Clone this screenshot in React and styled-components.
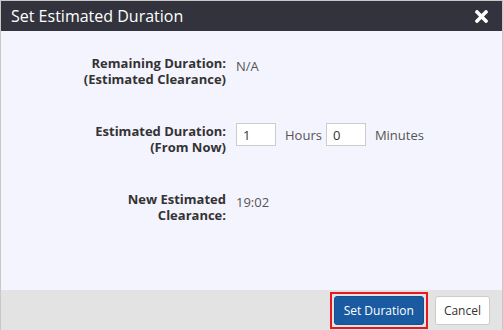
import React, { useState } from 'react'
import styled, { createGlobalStyle } from 'styled-components'
import { FaTimes } from 'react-icons/fa'

const GlobalStyle = createGlobalStyle`
    html, body {
        margin: 0;
        padding: 0;
        background: #ffffff;
    }
    * {
        box-sizing: border-box;
    }
`

function App() {
    const [hours, setHours] = useState('1')
    const [minutes, setMinutes] = useState('0')

    return (
        <>
            <GlobalStyle />
            <Dialog>
                <Header>
                    <Title>Set Estimated Duration</Title>
                    <CloseBtn aria-label="Close">
                        <FaTimes />
                    </CloseBtn>
                </Header>
                <Body>
                    <Row>
                        <Label>
                            <LabelLine>Remaining Duration:</LabelLine>
                            <LabelLine>(Estimated Clearance)</LabelLine>
                        </Label>
                        <Value>N/A</Value>
                    </Row>
                    <Row>
                        <Label>
                            <LabelLine>Estimated Duration:</LabelLine>
                            <LabelLine>(From Now)</LabelLine>
                        </Label>
                        <Value>
                            <NumberInput
                                value={hours}
                                onChange={(e) => setHours(e.target.value)}
                            />
                            <Unit>Hours</Unit>
                            <NumberInput
                                value={minutes}
                                onChange={(e) => setMinutes(e.target.value)}
                            />
                            <Unit>Minutes</Unit>
                        </Value>
                    </Row>
                    <Row>
                        <Label>
                            <LabelLine>New Estimated</LabelLine>
                            <LabelLine>Clearance:</LabelLine>
                        </Label>
                        <Value>19:02</Value>
                    </Row>
                </Body>
                <Footer>
                    <Highlight>
                        <Button primary>Set Duration</Button>
                    </Highlight>
                    <Button>Cancel</Button>
                </Footer>
            </Dialog>
        </>
    )
}

export default App

const Dialog = styled.div`
    width: 503px;
    height: 330px;
    display: flex;
    flex-direction: column;
    border: 1px solid #c8c8c8;
    border-bottom: none;
    font-family: 'Open Sans', 'Noto Sans', sans-serif;
    background: #f4f4fe;
`
const Header = styled.div`
    height: 30px;
    background: #33333e;
    display: flex;
    align-items: center;
    justify-content: space-between;
    padding: 0 11px 0 10px;
`
const Title = styled.div`
    color: #ffffff;
    font-size: 16px;
    line-height: 20px;
`
const CloseBtn = styled.span`
    color: #ffffff;
    font-size: 19px;
    display: flex;
    align-items: center;
    cursor: pointer;
`
const Body = styled.div`
    flex: 1;
    display: flex;
    flex-direction: column;
    gap: 36px;
    padding-top: 24px;
`
const Row = styled.div`
    display: grid;
    grid-template-columns: 225px 1fr;
    column-gap: 10px;
    align-items: start;
`
const Label = styled.div`
    display: flex;
    flex-direction: column;
    align-items: flex-end;
    font-weight: 700;
    font-size: 13px;
    color: #333333;
`
const LabelLine = styled.span`
    line-height: 16px;
    white-space: nowrap;
`
const Value = styled.div`
    display: flex;
    align-items: center;
    font-size: 13px;
    line-height: 22px;
    color: #555555;
`
const NumberInput = styled.input`
    width: 40px;
    height: 23px;
    border: 1px solid #cccccc;
    background: #ffffff;
    font-family: inherit;
    font-size: 13px;
    color: #333333;
    padding: 0 6px;
    outline: none;
`
const Unit = styled.span`
    margin: 0 4px 0 9px;
`
const Footer = styled.div`
    height: 40px;
    background: #e3e3e3;
    display: flex;
    align-items: center;
    justify-content: flex-end;
    gap: 7px;
    padding-right: 12px;
`
const Highlight = styled.div`
    border: 2px solid #e8161e;
    padding: 2px;
    display: flex;
`
const Button = styled.button`
    height: 29px;
    padding: 0 ${(p) => (p.primary ? '9px' : '8px')};
    border-radius: 3px;
    border: 1px solid ${(p) => (p.primary ? '#174f8c' : '#cccccc')};
    background: ${(p) => (p.primary ? '#1a5aa0' : '#ffffff')};
    color: ${(p) => (p.primary ? '#ffffff' : '#333333')};
    font-family: inherit;
    font-size: 12px;
    cursor: pointer;
`
